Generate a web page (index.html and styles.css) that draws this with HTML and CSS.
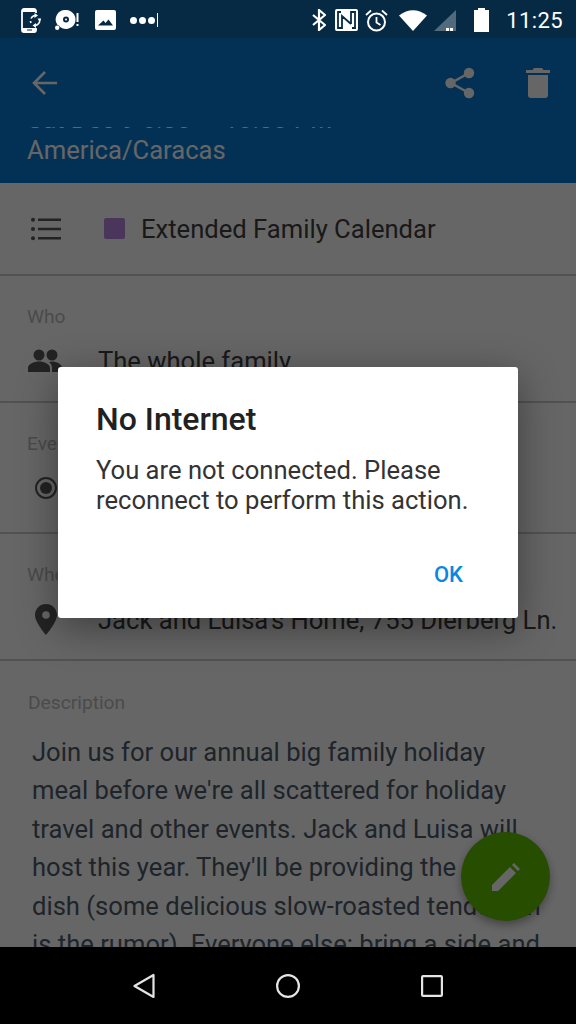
FILE: index.html
```html
<!DOCTYPE html>
<html lang="en">
<head>
    <meta charset="UTF-8">
    <title>Event details</title>
    <link rel="stylesheet" href="styles.css">
</head>
<body>
<div class="phone">
    <div class="status">
        <div class="status-left">
            <svg class="st-phone" width="20" height="25" viewBox="0 0 20 25"><path fill="none" stroke="#fff" stroke-width="1.800" d="M15 5V3a2 2 0 0 0-2-2H3a2 2 0 0 0-2 2v19a2 2 0 0 0 2 2h10a2 2 0 0 0 2-2v-2"/><path fill="#fff" d="M1 20h14v4H1zM1 1h14v3H1z"/><path fill="#072a44" d="M6 21.500h5v1H6z"/><path fill="none" stroke="#fff" stroke-width="1.600" d="M15 7.500a5 5 0 0 0-5 3M18.500 11a5 5 0 0 1-5 6.500M10 15a5 5 0 0 1-.5-2"/><path fill="#fff" d="M13.500 5l3.500 2.500-3.500 2.500zM15 15v5l-3.500-2.500zM16.500 10.500h4l-2 3z"/></svg>
            <svg class="st-disc" width="24" height="20" viewBox="0 0 24 20"><path fill="#fff" fill-rule="evenodd" d="M11 0a9.500 9.500 0 1 1-7.500 15.300 3 3 0 0 0-1-.3A9.500 9.500 0 0 1 11 0zm0 6.500a3 3 0 1 0 0 6 3 3 0 0 0 0-6z"/><circle cx="11" cy="9.500" r="1" fill="#fff"/><circle cx="2.200" cy="17.800" r="2.200" fill="#fff"/><rect x="21.500" y="3" width="2" height="9" fill="#fff"/><rect x="21.500" y="14" width="2" height="2" fill="#fff"/></svg>
            <svg class="st-image" width="21" height="20" viewBox="0 0 21 20"><path fill="#fff" fill-rule="evenodd" d="M2 0h17a2 2 0 0 1 2 2v16a2 2 0 0 1-2 2H2a2 2 0 0 1-2-2V2a2 2 0 0 1 2-2zM3 15.500h15l-4.500-6-3 3.500-2-2.500z"/></svg>
            <div class="dots"><i></i><i></i><i></i><b></b></div>
        </div>
        <div class="status-right">
            <svg class="st-bt" width="14" height="22" viewBox="0 0 14 22"><path fill="none" stroke="#fff" stroke-width="2.200" d="M1 6l12 10-6 5V1l6 5L1 16"/></svg>
            <svg class="st-nfc" width="23" height="22" viewBox="0 0 23 22"><rect width="23" height="22" rx="2" fill="#fff"/><path fill="none" stroke="#072a44" stroke-width="1.800" d="M6 3H3v16h4V7l9 8M17 19h3V3h-4v12"/></svg>
            <svg class="st-alarm" width="23" height="23" viewBox="0 0 23 23"><circle cx="11.500" cy="13" r="8.500" fill="none" stroke="#fff" stroke-width="2"/><path fill="none" stroke="#fff" stroke-width="1.800" d="M11.500 8v5.500l4 2.500M1 6l5-4.500M22 6l-5-4.500"/></svg>
            <svg class="st-wifi" width="28" height="21" viewBox="0 0 28 21"><path fill="#fff" d="M14 21L0 5.500Q14-5 28 5.500z"/></svg>
            <svg class="st-signal" width="22" height="21" viewBox="0 0 22 21"><path fill="#fff" fill-opacity=".3" d="M22 0v21H0z"/><path fill="#fff" d="M12 18h3v3h-3zM16 18h3v3h-3z"/></svg>
            <div class="battery"></div>
            <span class="clock">11:25</span>
        </div>
    </div>

    <div class="screen">
        <div class="appbar">
            <div class="toolbar">
                <svg class="ic-back" width="26" height="26" viewBox="0 0 26 26"><path fill="none" stroke="#fff" stroke-width="2.600" d="M26 13H3M14 2L3 13l11 11"/></svg>
                <div class="toolbar-right">
                    <svg width="30" height="32" viewBox="0 0 30 32"><path fill="none" stroke="#fff" stroke-width="2.500" d="M24 6L6 16l18 10"/><circle cx="24" cy="6" r="5.200" fill="#fff"/><circle cx="5.500" cy="16" r="5.200" fill="#fff"/><circle cx="24" cy="26" r="5.200" fill="#fff"/></svg>
                    <svg width="24" height="30" viewBox="0 0 24 30"><path fill="#fff" d="M8 0h8l1.500 2H24v3H0V2h6.500zM2 7h20v20a3 3 0 0 1-3 3H5a3 3 0 0 1-3-3z"/></svg>
                </div>
            </div>
            <div class="appbar-clip">
                <div class="appbar-time">Sat Dec 9 6:30 — 10:30 PM</div>
                <div class="appbar-zone">America/Caracas</div>
            </div>
        </div>

        <div class="row row-cal">
            <svg class="row-icon" width="30" height="24" viewBox="0 0 30 24"><path d="M7 1.500h23V4H7zM7 10.800h23v2.500H7zM7 20h23v2.500H7z"/><circle cx="2" cy="2.800" r="2"/><circle cx="2" cy="12" r="2"/><circle cx="2" cy="21.200" r="2"/></svg>
            <span class="swatch"></span>
            <span class="row-text">Extended Family Calendar</span>
        </div>

        <div class="section sec-who">
            <div class="label">Who</div>
            <div class="line">
                <svg class="line-icon" width="34" height="24" viewBox="0 0 34 24"><circle cx="11" cy="6" r="5.500"/><circle cx="24" cy="6" r="5.500"/><path d="M0 23v-4c0-4 6-6.500 11-6.500s11 2.500 11 6.500v4zM24 23v-4c0-2.500-1-4.500-3-6 1-.3 2-.5 3-.5 4.500 0 10 2.500 10 6.500v4z"/></svg>
                <span class="line-text">The whole family</span>
            </div>
        </div>

        <div class="section sec-event">
            <div class="label">Event</div>
            <div class="line">
                <svg class="line-icon" width="22" height="22" viewBox="0 0 22 22"><circle cx="11" cy="11" r="10" fill="none" stroke="#000" stroke-width="2"/><circle cx="11" cy="11" r="6"/></svg>
                <span class="line-text">Confirmed</span>
            </div>
        </div>

        <div class="section sec-where">
            <div class="label">Where</div>
            <div class="line">
                <svg class="line-icon" width="22" height="31" viewBox="0 0 22 31"><path fill-rule="evenodd" d="M11 0c6.100 0 11 4.900 11 11 0 7.500-11 20-11 20S0 18.500 0 11C0 4.900 4.900 0 11 0zm0 7.200a3.800 3.800 0 1 0 0 7.600 3.800 3.800 0 0 0 0-7.600z"/></svg>
                <span class="line-text">Jack and Luisa's Home, 755 Dierberg Ln.</span>
            </div>
        </div>

        <div class="desc">
            <div class="label">Description</div>
            <p class="desc-text">Join us for our annual big family holiday meal before we're all scattered for holiday travel and other events. Jack and Luisa will host this year. They'll be providing the main dish (some delicious slow-roasted tenderloin is the rumor). Everyone else: bring a side and</p>
        </div>

        <div class="fab">
            <svg width="30" height="30" viewBox="0 0 30 30"><path fill="#fff" d="M1 23L19 5l6 6L7 29H1zM21 3l2-2 6 6-2 2z"/></svg>
        </div>

        <div class="scrim">
            <div class="dialog">
                <h2 class="dialog-title">No Internet</h2>
                <p class="dialog-msg">You are not connected. Please reconnect to perform this action.</p>
                <div class="dialog-actions"><span class="dialog-ok">OK</span></div>
            </div>
        </div>
    </div>

    <div class="navbar">
        <svg width="22" height="26" viewBox="0 0 22 26"><path fill="none" stroke="#e4e4e4" stroke-width="2.200" stroke-linejoin="round" d="M20.500 2v22L1.500 13z"/></svg>
        <svg width="24" height="24" viewBox="0 0 24 24"><circle cx="12" cy="12" r="10.900" fill="none" stroke="#e4e4e4" stroke-width="2.200"/></svg>
        <svg width="22" height="22" viewBox="0 0 22 22"><rect x="1.100" y="1.100" width="19.800" height="19.800" rx="1" fill="none" stroke="#e4e4e4" stroke-width="2.200"/></svg>
    </div>
</div>
</body>
</html>
```
FILE: styles.css
```css
*{ margin:0; padding:0; box-sizing:border-box;}
body{
    width:576px;
    height:1024px;
    overflow:hidden;
    font-family:Roboto,"Noto Sans",sans-serif;
}
.phone{
    width:576px;
    height:1024px;
    display:flex;
    flex-direction:column;
    background:#000;
}

/* status bar */
.status{
    height:38px;
    flex:none;
    background:#072a44;
    display:flex;
    justify-content:space-between;
    align-items:center;
    padding:2px 13px 0 21px;
}
.status-left,.status-right{
    display:flex;
    align-items:center;
}
.st-disc{ margin-left:14px;}
.st-image{ margin-left:16px;}
.dots{
    display:flex;
    align-items:center;
    gap:2px;
    margin-left:14px;
}
.dots i{
    width:7px;
    height:7px;
    border-radius:50%;
    background:#fff;
}
.dots b{
    width:1px;
    height:14px;
    background:#fff;
}
.st-nfc{ margin-left:9px;}
.st-alarm{ margin-left:7px;}
.st-wifi{ margin-left:11px;}
.st-signal{ margin-left:7px;}
.battery{
    width:15px;
    height:22px;
    margin:2px 0 0 18px;
    background:#fff;
    position:relative;
}
.battery:before{
    content:"";
    position:absolute;
    top:-2px;
    left:4px;
    width:7px;
    height:2px;
    background:#fff;
}
.clock{
    margin-left:17px;
    font-size:22px;
    letter-spacing:.4px;
    color:#fff;
}

/* everything under the scrim */
.screen{
    height:909px;
    flex:none;
    position:relative;
    overflow:hidden;
    background:#fff;
}
.appbar{
    height:145px;
    background:#057cd4;
    color:#fff;
}
.toolbar{
    height:89px;
    display:flex;
    justify-content:space-between;
    align-items:center;
    padding:1px 26px 0 31px;
}
.toolbar-right{
    display:flex;
    align-items:center;
    gap:51px;
}
.appbar-clip{
    height:56px;
    overflow:hidden;
    padding:0 27px;
}
.appbar-time{
    font-size:25.6px;
    line-height:28px;
    margin-top:-22px;
}
.appbar-zone{
    font-size:25.6px;
    line-height:28px;
    margin-top:3px;
}

.row-cal{
    height:93px;
    display:flex;
    align-items:center;
    padding-left:31px;
    border-bottom:2px solid #ccc;
}
.row-icon{ opacity:.65;}
.swatch{
    width:21px;
    height:21px;
    border-radius:2px;
    background:#b888e0;
    margin-left:43px;
}
.row-text{
    margin-left:16px;
    font-size:25.6px;
    color:#404040;
}
.section{
    padding-left:27px;
    border-bottom:2px solid #ccc;
}
.sec-who{ height:127px;}
.sec-event{ height:131px;}
.sec-where{ height:127px;}
.label{
    font-size:19.2px;
    line-height:22px;
    color:#bbb;
    padding-top:30px;
}
.line{
    display:flex;
    align-items:center;
    height:34px;
    margin-top:16px;
    white-space:nowrap;
}
.line-icon{
    flex:none;
    opacity:.65;
}
.line-text{
    font-size:25.6px;
    color:#404040;
}
.sec-who .line-icon{ margin-left:1px;}
.sec-who .line-text{ margin-left:36px;}
.sec-event .line-icon{ margin-left:8px;}
.sec-event .line-text{ margin-left:41px;}
.sec-where .line-icon{ margin-left:8px;}
.sec-where .line-text{ margin-left:41px; padding-top:2px;}
.desc{
    padding:31px 0 0 32px;
}
.desc .label{
    padding-top:0;
    margin-left:-4px;
}
.desc-text{
    margin-top:19px;
    font-size:25.6px;
    line-height:38.4px;
    color:#4d5b6a;
    width:512px;
}
.fab{
    position:absolute;
    left:461px;
    top:794px;
    width:89px;
    height:89px;
    border-radius:50%;
    background:#62c000;
    box-shadow:0 4px 10px rgba(0,0,0,.35);
    display:flex;
    align-items:center;
    justify-content:center;
}

/* dialog */
.scrim{
    position:absolute;
    top:0;
    left:0;
    right:0;
    bottom:0;
    background:rgba(0,0,0,.6);
    display:flex;
    align-items:center;
    justify-content:center;
}
.dialog{
    width:460px;
    height:251px;
    background:#fff;
    border-radius:3px;
    padding:33px 38px 0;
    box-shadow:0 10px 40px rgba(0,0,0,.4);
    display:flex;
    flex-direction:column;
}
.dialog-title{
    font-size:32px;
    line-height:38px;
    font-weight:500;
    color:#212121;
}
.dialog-msg{
    margin-top:17px;
    font-size:25.6px;
    line-height:30px;
    color:#333;
}
.dialog-actions{
    margin-top:auto;
    height:56px;
    text-align:right;
}
.dialog-ok{
    font-size:22px;
    font-weight:500;
    color:#0a88de;
    margin-right:17px;
}

.navbar{
    flex:1;
    background:#000;
    display:flex;
    align-items:center;
    justify-content:center;
    gap:121px;
}
```
